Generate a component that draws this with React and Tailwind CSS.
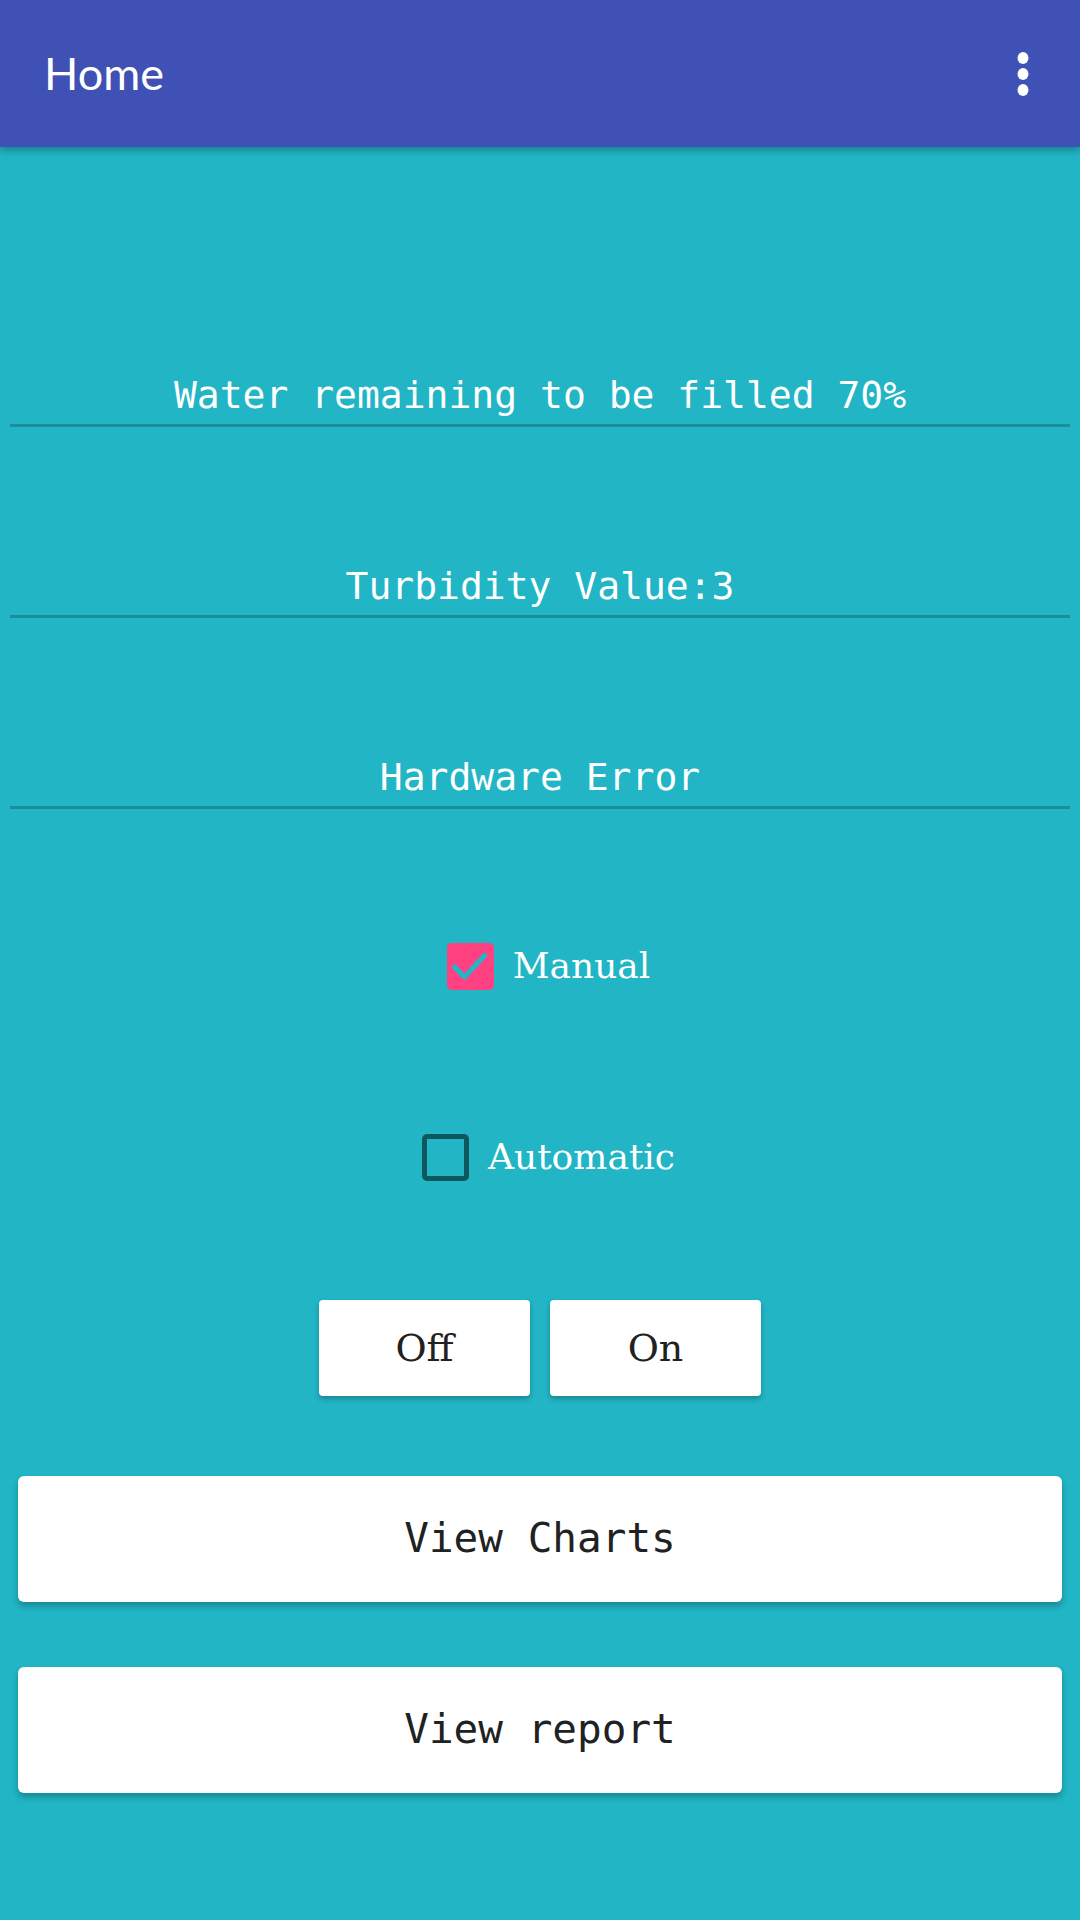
import React from "react";

function Row({ children, first }) {
  return (
    <div
      className={`${first ? "mt-[225px]" : "mt-[136px]"} mx-[10px] pb-[6px] border-b-[3px] border-[#1a8f9b] text-center text-white text-[38px] leading-[46px] font-['DejaVu_Sans_Mono','Liberation_Mono',monospace]`}
    >
      {children}
    </div>
  );
}

function SmallButton({ children }) {
  return (
    <button className="w-[211px] h-[96px] bg-white rounded-[4px] shadow-[0_3px_5px_rgba(0,0,0,0.25)] text-[#212121] text-[38px] flex items-center justify-center font-['DejaVu_Serif','Liberation_Serif',serif]">
      {children}
    </button>
  );
}

function WideButton({ children, className }) {
  return (
    <button
      className={`${className} mx-[18px] h-[126px] bg-white rounded-[6px] shadow-[0_4px_6px_rgba(0,0,0,0.25)] text-[#212121] text-[41px] flex items-center justify-center font-['DejaVu_Sans_Mono','Liberation_Mono',monospace]`}
    >
      {children}
    </button>
  );
}

export default function App() {
  return (
    <div className="w-[1080px] h-[1920px] bg-[#21b5c5] flex flex-col overflow-hidden">
      <header className="relative z-10 h-[147px] shrink-0 bg-[#3f51b5] flex items-center justify-between pl-[44px] pr-[50px] shadow-[0_3px_8px_rgba(0,0,0,0.3)]">
        <span className="text-white text-[45px] leading-none font-['Lato','Noto_Sans',sans-serif]">
          Home
        </span>
        <svg width="14" height="48" viewBox="0 0 14 48">
          <ellipse cx="7" cy="8" rx="5.5" ry="6" fill="#fff" />
          <ellipse cx="7" cy="24" rx="5.5" ry="6" fill="#fff" />
          <ellipse cx="7" cy="40" rx="5.5" ry="6" fill="#fff" />
        </svg>
      </header>

      <Row first>Water remaining to be filled 70%</Row>
      <Row>Turbidity Value:3</Row>
      <Row>Hardware Error</Row>

      <div className="mt-[133px] h-[48px] flex items-center justify-center pl-[17px] gap-[19px]">
        <div className="w-[47px] h-[47px] rounded-[5px] bg-[#ff4081] flex items-center justify-center">
          <svg width="47" height="47" viewBox="0 0 47 47">
            <polyline
              points="6,22.5 17.5,34 39,11"
              fill="none"
              stroke="#21b5c5"
              strokeWidth="5"
            />
          </svg>
        </div>
        <span className="text-white text-[36px] leading-none font-['DejaVu_Serif','Liberation_Serif',serif]">
          Manual
        </span>
      </div>

      <div className="mt-[143px] h-[48px] flex items-center justify-center pl-[17px] gap-[19px]">
        <div className="w-[47px] h-[47px] rounded-[5px] border-[5px] border-[#0f575e]" />
        <span className="text-white text-[36px] leading-none font-['DejaVu_Serif','Liberation_Serif',serif]">
          Automatic
        </span>
      </div>

      <div className="mt-[119px] flex justify-center gap-[20px]">
        <SmallButton>Off</SmallButton>
        <SmallButton>On</SmallButton>
      </div>

      <WideButton className="mt-[80px]">View Charts</WideButton>
      <WideButton className="mt-[65px]">View report</WideButton>
    </div>
  );
}
